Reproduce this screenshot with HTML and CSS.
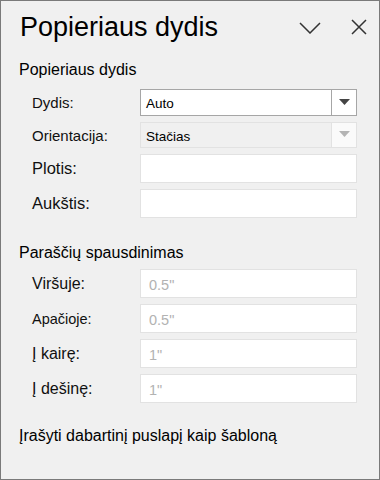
FILE: index.html
```html
<!DOCTYPE html>
<html>
  <head>
    <meta charset="UTF-8">
    <meta name="viewport" content="width=device-width, initial-scale=1.0">
    <title>Popieriaus dydis</title>
    <link rel="stylesheet" href="styles.css">
  </head>

  <body>
    <div class="pane">
      <div class="pane-header">
        <h1 class="pane-title">Popieriaus dydis</h1>
        <button class="pane-btn pane-btn-collapse" title="Sutraukti">
          <svg width="22" height="12" viewBox="0 0 22 12"><path d="M1 1 L11 11 L21 1" fill="none" stroke="#333" stroke-width="1.5"/></svg>
        </button>
        <button class="pane-btn pane-btn-close" title="Uždaryti">
          <svg width="16" height="16" viewBox="0 0 16 16"><path d="M1 1 L15 15 M15 1 L1 15" fill="none" stroke="#333" stroke-width="1.5"/></svg>
        </button>
      </div>

      <h2 class="section-title">Popieriaus dydis</h2>
      <div class="form">
        <label class="form-label" for="size">Dydis:</label>
        <div class="form-select" id="size">
          <span class="form-select-value">Auto</span>
          <span class="form-select-arrow"><svg width="11" height="6" viewBox="0 0 11 6"><path d="M0 0 L11 0 L5.5 6 Z" fill="#444"/></svg></span>
        </div>

        <label class="form-label" for="orientation">Orientacija:</label>
        <div class="form-select form-select-disabled" id="orientation">
          <span class="form-select-value">Stačias</span>
          <span class="form-select-arrow"><svg width="11" height="6" viewBox="0 0 11 6"><path d="M0 0 L11 0 L5.5 6 Z" fill="#b4b4b4"/></svg></span>
        </div>

        <label class="form-label form-label-lg" for="width">Plotis:</label>
        <input class="form-input-text" id="width" type="text">

        <label class="form-label form-label-lg" for="height">Aukštis:</label>
        <input class="form-input-text" id="height" type="text">
      </div>

      <h2 class="section-title section-title-margins">Paraščių spausdinimas</h2>
      <div class="form">
        <label class="form-label form-label-md" for="top">Viršuje:</label>
        <input class="form-input-text" id="top" type="text" placeholder="0.5&quot;">

        <label class="form-label form-label-sm" for="bottom">Apačioje:</label>
        <input class="form-input-text" id="bottom" type="text" placeholder="0.5&quot;">

        <label class="form-label form-label-md" for="left">Į kairę:</label>
        <input class="form-input-text" id="left" type="text" placeholder="1&quot;">

        <label class="form-label form-label-md" for="right">Į dešinę:</label>
        <input class="form-input-text" id="right" type="text" placeholder="1&quot;">
      </div>

      <a class="pane-link" href="#">Įrašyti dabartinį puslapį kaip šabloną</a>
    </div>
  </body>
</html>
```

FILE: styles.css
```css
* {
  box-sizing: border-box;
  font-family: "Liberation Sans", Arial, sans-serif;
}

body {
  margin: 0;
}

.pane {
  width: 380px;
  height: 480px;
  background: rgb(240, 240, 240);
  border: 1px solid rgb(122, 122, 122);
  color: rgb(0, 0, 0);
}

.pane-header {
  display: flex;
  align-items: center;
  height: 52px;
  padding-left: 19px;
  padding-right: 12px;
}

.pane-title {
  flex: 1;
  margin: 0;
  font-size: 27px;
  font-weight: normal;
}

.pane-btn {
  border: 0;
  background: none;
  padding: 0;
  display: flex;
}

.pane-btn-collapse {
  margin-right: 30px;
  margin-top: 1px;
}

.section-title {
  margin: 8px 0 10px 18px;
  font-size: 16px;
  font-weight: normal;
}

.section-title-margins {
  margin-top: 26px;
  margin-bottom: 7px;
}

.form {
  display: grid;
  grid-template-columns: 108px 217px;
  row-gap: 6px;
  padding-left: 31px;
}

.form-label {
  display: flex;
  align-items: center;
  font-size: 15px;
  color: rgb(16, 16, 16);
}

.form-label-sm {
  font-size: 14.5px;
}

.form-label-md {
  font-size: 16px;
}

.form-label-lg {
  font-size: 16.5px;
}

.form-select {
  display: flex;
  height: 27px;
  background: rgb(255, 255, 255);
  border: 1px solid rgb(166, 166, 166);
}

.form-select-value {
  flex: 1;
  display: flex;
  align-items: center;
  padding-left: 5px;
  padding-top: 2px;
  font-size: 13.5px;
}

.form-select-arrow {
  width: 25px;
  display: flex;
  align-items: center;
  justify-content: center;
  border-left: 1px solid rgb(166, 166, 166);
  padding-bottom: 2px;
}

.form-select-disabled {
  height: 26px;
  background: rgb(240, 240, 240);
  border-color: rgb(226, 226, 226);
}

.form-select-disabled .form-select-arrow {
  background: rgb(250, 250, 250);
  border-left-color: rgb(226, 226, 226);
}

.form-input-text {
  height: 29px;
  border: 1px solid rgb(226, 226, 226);
  background: rgb(255, 255, 255);
  padding: 2px 8px 0;
  font-size: 14.5px;
  outline: none;
}

.form-input-text::placeholder {
  color: rgb(178, 178, 178);
}

.pane-link {
  display: block;
  margin: 24px 0 0 18px;
  font-size: 16px;
  color: rgb(0, 0, 0);
  text-decoration: none;
}
```
